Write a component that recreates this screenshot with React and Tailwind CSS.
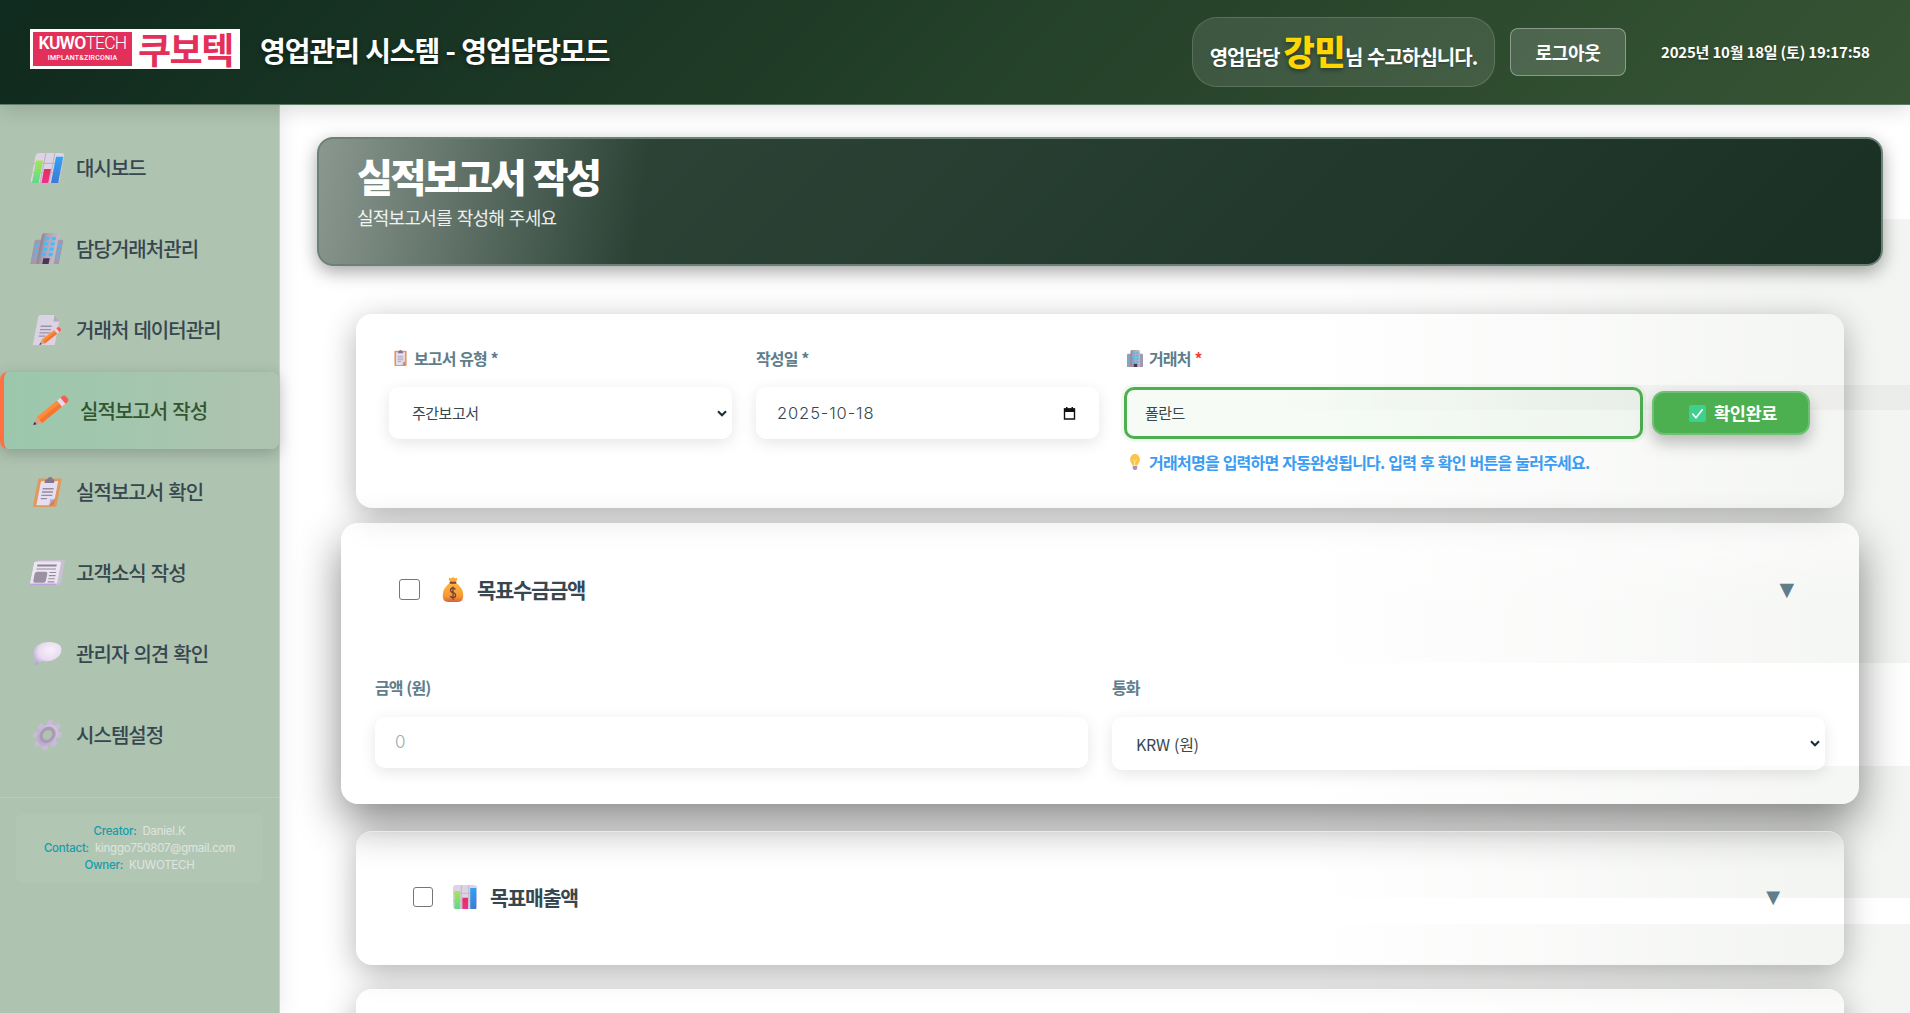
import React from "react";

const base = { viewBox: "0 0 32 32", preserveAspectRatio: "none" };

function ChartIcon({ className }) {
  return (
    <svg {...base} className={className}>
      <defs>
        <linearGradient id="ch1" x1="0" y1="0" x2="0" y2="1"><stop offset="0" stopColor="#a5e653" /><stop offset="1" stopColor="#5fd88b" /></linearGradient>
        <linearGradient id="ch2" x1="0" y1="0" x2="0" y2="1"><stop offset="0" stopColor="#e0305e" /><stop offset="1" stopColor="#f0308a" /></linearGradient>
        <linearGradient id="ch3" x1="0" y1="0" x2="0" y2="1"><stop offset="0" stopColor="#2fa3f5" /><stop offset="1" stopColor="#3f79d4" /></linearGradient>
      </defs>
      <rect x="0" y="0" width="32" height="32" rx="4" fill="#dcd3e4" />
      <path d="M11 0v32M21 0v32M0 11h32M0 21h32" stroke="#bdb2c6" strokeWidth="1.2" />
      <rect x="2" y="8" width="7.5" height="24" fill="url(#ch1)" />
      <rect x="12.5" y="17" width="7.5" height="15" fill="url(#ch2)" />
      <rect x="23" y="4" width="8" height="28" fill="url(#ch3)" />
    </svg>
  );
}

function BuildingIcon({ className }) {
  const rows = [6, 11.5, 17, 22.5];
  return (
    <svg {...base} className={className}>
      <defs>
        <linearGradient id="bd1" x1="0" y1="0" x2="1" y2="0"><stop offset="0" stopColor="#8d8294" /><stop offset=".3" stopColor="#ada2b4" /><stop offset="1" stopColor="#c3b9c9" /></linearGradient>
      </defs>
      <path d="M0 9q0-2 2-2h28q2 0 2 2v23H0z" fill="#a498ab" />
      <path d="M7 3q0-3 3-3h13q3 0 3 3v29H7z" fill="url(#bd1)" />
      {rows.map((y) => (
        <g key={y} fill="#45bdf8">
          <rect x="11" y={y - 2} width="4.6" height="3.4" rx=".5" />
          <rect x="18.5" y={y - 2} width="4.6" height="3.4" rx=".5" />
          {y > 6 && <rect x="2.5" y={y} width="2.6" height="3.4" />}
          {y > 6 && <rect x="27.6" y={y} width="2.6" height="3.4" />}
        </g>
      ))}
      <rect x="13.5" y="26" width="7" height="6" fill="#4a3552" />
    </svg>
  );
}

function PencilShape() {
  return (
    <g>
      <path d="M3.2 22.6 22 3.8l6.2 6.2L9.4 28.8z" fill="#ff8a3a" />
      <path d="M6.3 25.7 25 7l3.2 3L9.4 28.8z" fill="#f5762f" />
      <path d="M3.2 22.6 1 31l8.4-2.2z" fill="#d9a189" />
      <path d="M1.9 27.7 1 31l3.3-.9z" fill="#3d2a4a" />
      <path d="m20 5.8 3-3 6.2 6.2-3 3z" fill="#e4d8ee" />
      <path d="m23 2.8 1.5-1.5q2-1.5 4 .4l1.8 1.8q2 2 .4 4L29.2 9z" fill="#ff5a4a" />
    </g>
  );
}

function PencilIcon({ className }) {
  return (
    <svg {...base} className={className}><PencilShape /></svg>
  );
}

function MemoIcon({ className }) {
  return (
    <svg {...base} className={className}>
      <path d="M2 2q0-2 2-2h17l7 7v25H2z" fill="#dbd3e3" />
      <path d="M21 0v7h7z" fill="#b5a9be" />
      <path d="M7 12h13M7 15.5h13M7 19h13M7 22.5h8" stroke="#9d93a5" strokeWidth="1.4" />
      <g transform="translate(9 12.5) scale(.74 .62)"><PencilShape /></g>
    </svg>
  );
}

function ClipboardIcon({ className }) {
  return (
    <svg {...base} className={className}>
      <rect x="1" y="1.5" width="30" height="30.5" rx="1.5" fill="#e0995c" />
      <path d="M5 4.5h22V23l-6 7H5z" fill="#e6def0" />
      <path d="M27 23v7h-6z" fill="#c98552" />
      <path d="M21 30q1.5-3 0-6.5 3 1 6-.5z" fill="#b9a5d4" />
      <path d="M10 6.5V4q0-2 3-2 0-2 3-2t3 2q3 0 3 2v2.5z" fill="#82778d" />
      <path d="M9 12.5h14M9 16h14M9 19.5h14M9 23h8" stroke="#958b9f" strokeWidth="1.4" />
    </svg>
  );
}

function NewsIcon({ className }) {
  return (
    <svg {...base} className={className}>
      <path d="M4 0h26q2 0 2 3v26q0 3-3 3H6z" fill="#c9bfd3" />
      <path d="M0 4q0-2 2-2h24q2 0 2 2v28H0z" fill="#ece6f2" />
      <path d="M0 30h28v2H0z" fill="#bda3df" />
      <path d="M4 7h20" stroke="#8d8296" strokeWidth="2.6" />
      <path d="M4 11.5h20M18 16h7M18 20h7M18 24h7M18 28h7" stroke="#958a9e" strokeWidth="1.5" />
      <rect x="3" y="15" width="13" height="14" rx="2.5" fill="#9b90a4" />
    </svg>
  );
}

function BubbleIcon({ className }) {
  return (
    <svg {...base} className={className}>
      <defs>
        <radialGradient id="bb" cx=".6" cy=".35" r=".7"><stop offset="0" stopColor="#f7f1fa" /><stop offset=".6" stopColor="#e8dcf0" /><stop offset="1" stopColor="#b9a3d6" /></radialGradient>
      </defs>
      <path d="M16 0c9.5 0 16 5 16 12.8S25.5 27 16 27q-2 0-4-.4Q9 30.5 5.500 32q-2 0-1-1.5 1-2.5.5-5.5-5-4-5-11.500C0 5.5 6.5 0 16 0z" fill="url(#bb)" />
    </svg>
  );
}

function GearIcon({ className }) {
  return (
    <svg {...base} className={className}>
      <defs>
        <linearGradient id="gr" x1="0" y1="1" x2="1" y2="0"><stop offset="0" stopColor="#b6a3d0" /><stop offset="1" stopColor="#d6cade" /></linearGradient>
      </defs>
      {[0, 45, 90, 135, 180, 225, 270, 315].map((a) => (
        <rect key={a} x="12.8" y="0" width="6.4" height="9" rx="2.4" fill="#c9bad9" transform={`rotate(${a} 16 16)`} />
      ))}
      <circle cx="16" cy="16" r="11.5" fill="url(#gr)" />
      <circle cx="16" cy="16" r="7" fill="#aec3b0" stroke="#a89bb3" strokeWidth="3.6" />
    </svg>
  );
}

function MoneyBagIcon({ className }) {
  return (
    <svg {...base} className={className}>
      <defs>
        <linearGradient id="mb" x1="0" y1="0" x2="0" y2="1"><stop offset="0" stopColor="#fdb73c" /><stop offset=".7" stopColor="#f59a35" /><stop offset="1" stopColor="#d95f3c" /></linearGradient>
      </defs>
      <path d="M10 1q3 1.5 6-1 3 2.5 6 1 1 2-2 6h-8Q9 3 10 1z" fill="#fbab38" />
      <path d="M12 7h8q11 7 11 17 0 8-8 8H9q-8 0-8-8Q1 14 12 7z" fill="url(#mb)" />
      <rect x="11" y="6" width="10" height="2.6" rx="1.2" fill="#7c4138" />
      <path d="M19.5 16q-1.5-2-3.8-2-3.2 0-3.2 3 0 2.3 3.5 3 3.8.8 3.8 3.4 0 3.1-3.8 3.1-2.5 0-4-2.200M16 12v17" stroke="#7c4138" strokeWidth="1.9" fill="none" />
    </svg>
  );
}

function BulbIcon({ className }) {
  return (
    <svg {...base} className={className}>
      <path d="M16 0c8 0 13 5 13 11.5 0 5-5 7-6.5 11.5h-13C8 18.5 3 16.5 3 11.5 3 5 8 0 16 0z" fill="#fcc34b" />
      <path d="M12 11l3 4v8M20 11l-3 4" stroke="#fff0a5" strokeWidth="2" fill="none" />
      <path d="M10 24h12v5q-2 3-6 3t-6-3z" fill="#a795bd" />
    </svg>
  );
}

function CheckIcon({ className }) {
  return (
    <svg {...base} className={className}>
      <rect width="32" height="32" rx="4" fill="#3fd08d" />
      <path d="M7 17l6 7L25 9" stroke="#fff" strokeWidth="3.2" fill="none" strokeLinecap="round" strokeLinejoin="round" />
    </svg>
  );
}

const Chevron = () => (
  <svg viewBox="0 0 10 7" className="h-[7px] w-[10px]"><path d="M1 1.2l4 4 4-4" stroke="#1f2d35" strokeWidth="2.1" fill="none" /></svg>
);

const nav = [
  { label: "대시보드", Icon: ChartIcon, size: "h-[30px] w-[29px]" },
  { label: "담당거래처관리", Icon: BuildingIcon, size: "h-[31px] w-[29px]" },
  { label: "거래처 데이터관리", Icon: MemoIcon, size: "h-[30px] w-[27px]" },
  { label: "실적보고서 작성", Icon: PencilIcon, size: "h-[31px] w-[32px]", active: true },
  { label: "실적보고서 확인", Icon: ClipboardIcon, size: "h-[30px] w-[25px]" },
  { label: "고객소식 작성", Icon: NewsIcon, size: "h-[25px] w-[31px]" },
  { label: "관리자 의견 확인", Icon: BubbleIcon, size: "h-[23px] w-[28px]" },
  { label: "시스템설정", Icon: GearIcon, size: "h-[30px] w-[29px]" },
];

function Header() {
  return (
    <header className="relative z-20 flex h-[105px] shrink-0 items-center border-b border-[#5f7c68] bg-[linear-gradient(135deg,#0f2a1e_0%,#375534_100%)] pl-[30px] text-white shadow-[0_4px_20px_rgba(0,0,0,0.15)]">
      <div className="-mt-[7px] flex h-10 w-[210px] shrink-0 items-center bg-white pl-[3px]">
        <div className="flex h-[34px] w-[99px] flex-col items-center justify-center bg-[#e2305a] font-['Roboto'] leading-none">
          <span className="text-[17.5px] font-semibold tracking-[-0.8px]">KUWO<span className="font-light">TECH</span></span>
          <span className="mt-[3px] text-[7px] font-medium tracking-[0.2px]">IMPLANT&amp;ZIRCONIA</span>
        </div>
        <span className="-mt-[2px] ml-[6px] text-[36px] font-bold leading-[40px] tracking-[-1.5px] text-[#e2305a]">쿠보텍</span>
      </div>
      <h1 className="-mt-[5px] ml-[20px] whitespace-nowrap text-[28px] font-bold leading-none tracking-[-1.05px] [text-shadow:0_2px_4px_rgba(0,0,0,0.4)] [word-spacing:1px]">영업관리 시스템 - 영업담당모드</h1>
      <div className="ml-auto flex h-[70px] w-[303px] items-center justify-center rounded-[25px] border border-white/15 bg-white/10">
        <p className="mt-px flex items-baseline whitespace-nowrap text-[20px] font-bold tracking-[-0.95px] [text-shadow:0_1px_2px_rgba(0,0,0,0.3)] [word-spacing:1px]">
          영업담당
          <strong className="ml-[4px] text-[34px] font-black leading-none tracking-[-0.5px] text-[#ffd700] [text-shadow:0_2px_4px_rgba(0,0,0,0.4)]">강민</strong>
          님 수고하십니다.
        </p>
      </div>
      <button className="ml-[15px] h-12 w-[116px] rounded-lg border border-white/35 bg-white/15 text-[18px] font-bold tracking-[-0.3px]">로그아웃</button>
      <time className="ml-[35px] w-[249px] whitespace-nowrap text-[15px] font-bold tracking-[-0.2px] [text-shadow:0_1px_2px_rgba(0,0,0,0.3)]">2025년 10월 18일 (토) 19:17:58</time>
    </header>
  );
}

function Sidebar() {
  return (
    <aside className="relative z-10 w-[280px] shrink-0 border-r border-[#c3d3c5] bg-[#aec3b0] pt-6 shadow-[2px_0_20px_rgba(0,0,0,0.08)]">
      <nav className="flex flex-col gap-1">
        {nav.map(({ label, Icon, size, active }) => (
          <a
            key={label}
            className={
              active
                ? "flex h-[77px] items-center rounded-lg border-l-4 border-[#ff7043] bg-[linear-gradient(90deg,#9bc8ad,#aec3b0)] pl-[28px] text-[#33552f] shadow-[0_4px_15px_rgba(0,0,0,0.2)]"
                : "flex h-[77px] items-center pl-[28px] text-[#37474f]"
            }
          >
            <span className="flex w-[38px] justify-center"><Icon className={`-skew-x-[11deg] ${size}`} /></span>
            <span className="ml-[10px] mt-px whitespace-nowrap text-[20px] font-medium leading-none tracking-[-0.95px] [word-spacing:1.5px]">{label}</span>
          </a>
        ))}
      </nav>
      <div className="mt-6 border-t border-white/15 py-4 pl-4 pr-[16px]">
        <div className="flex h-[69px] flex-col items-center justify-center rounded-lg bg-white/5 font-['Inter'] text-[11.5px] leading-[17px] tracking-[-0.23px] text-white/55">
          <p><b className="mr-[6px] font-medium text-[#129daa]">Creator:</b>Daniel.K</p>
          <p><b className="mr-[6px] font-medium text-[#129daa]">Contact:</b>kinggo750807@gmail.com</p>
          <p><b className="mr-[6px] font-medium text-[#129daa]">Owner:</b>KUWOTECH</p>
        </div>
      </div>
    </aside>
  );
}

const label = "flex items-center whitespace-nowrap text-[16px] font-bold leading-none tracking-[-0.9px] [word-spacing:1px] text-[#607d8b]";
const field = "flex items-center rounded-[10px] bg-white/60 text-[#37474f] shadow-[0_4px_15px_rgba(0,0,0,0.1)]";

function ReportForm() {
  return (
    <section className="flex h-[194px] rounded-[16px] bg-white/15 pl-[33px] pt-[35px] shadow-[0_8px_32px_rgba(0,0,0,0.3)]">
      <div className="w-[343px]">
        <div className={`${label} h-[18px]`}><ClipboardIcon className="ml-[5px] mr-[7px] h-4 w-[13px]" />보고서 유형 *</div>
        <div className={`${field} mt-[20px] h-[52px] justify-between pl-[23px] pr-[5px] text-[15px] tracking-[-0.5px]`}>주간보고서<Chevron /></div>
      </div>
      <div className="ml-6 w-[343px]">
        <div className={`${label} h-[18px]`}>작성일 *</div>
        <div className={`${field} mt-[20px] h-[52px] justify-between pl-[21px] pr-[23px] font-['Inter'] text-[16.5px] font-light tracking-[0.9px]`}>
          2025-10-18
          <svg viewBox="0 0 13 13" className="h-[13px] w-[13px]"><path d="M1.500 2h10v10H1.500z" fill="none" stroke="#111" strokeWidth="1.4" /><path d="M1 1.500h11V5H1zM3 0h1.5v2H3zM8.5 0H10v2H8.500z" fill="#111" /></svg>
        </div>
      </div>
      <div className="ml-[25px] w-[687px]">
        <div className={`${label} h-[18px]`}><BuildingIcon className="ml-[3px] mr-[6px] h-[17px] w-[16px]" />거래처<span className="ml-[4px] text-[#f44336]">*</span></div>
        <div className="mt-[20px] flex items-center gap-[9px]">
          <div className="flex h-[52px] w-[519px] items-center rounded-[10px] border-[3px] border-[#4caf50] bg-[#4caf50]/5 pl-[18px] text-[15px] tracking-[-0.6px] text-[#37474f] shadow-[0_0_0_3px_rgba(76,175,80,0.08)]">폴란드</div>
          <button className="flex h-[44px] w-[158px] items-center justify-center rounded-[12px] border-2 border-[#6fc073] bg-[#4caf50] text-[17.5px] font-bold tracking-[-0.3px] text-white shadow-[0_8px_16px_rgba(0,0,0,0.25)]"><CheckIcon className="ml-1 mr-2 h-[17px] w-[17px]" />확인완료</button>
        </div>
        <div className="mt-[13px] flex h-5 items-center whitespace-nowrap text-[16px] font-bold leading-none tracking-[-0.75px] text-[#3a9cf2] [word-spacing:0.9px]"><BulbIcon className="ml-[5px] mr-2 h-4 w-[12px]" />거래처명을 입력하면 자동완성됩니다. 입력 후 확인 버튼을 눌러주세요.</div>
      </div>
    </section>
  );
}

function GoalCollection() {
  return (
    <section className="-mx-[15px] mt-[15px] h-[281px] rounded-[17px] bg-[linear-gradient(180deg,rgba(255,255,255,0.6),rgba(255,255,255,0.2)_30%)] pt-[44px] shadow-[0_18px_44px_rgba(0,0,0,0.47)]">
      <div className="flex h-[44px] items-center pl-[58px] pr-[65px]">
        <span className="h-[21px] w-[21px] rounded-[3px] border border-[#767676] bg-white" />
        <MoneyBagIcon className="ml-[22px] h-[25px] w-[22px]" />
        <h3 className="ml-[13px] text-[21px] font-bold leading-none tracking-[-1.3px] text-[#37474f]">목표수금금액</h3>
        <span className="ml-auto font-['DejaVu_Sans'] text-[19px] leading-none text-[#607d8b]">▼</span>
      </div>
      <div className="mt-[67px] grid grid-cols-2 gap-6 px-[34px]">
        <div>
          <div className={`${label} h-[18px]`}>금액 (원)</div>
          <div className={`${field} mt-[21px] h-[51px] pl-5 font-['Inter'] text-[17px] font-light text-[#a0aab2]!`}>0</div>
        </div>
        <div>
          <div className={`${label} h-[18px]`}>통화</div>
          <div className={`${field} mt-[21px] h-[53px] justify-between pl-[24px] pr-[5px] text-[16px] tracking-[-0.3px] [word-spacing:1px]`}>KRW (원)<Chevron /></div>
        </div>
      </div>
    </section>
  );
}

function GoalSales() {
  return (
    <section className="mt-[27px] h-[134px] rounded-[16px] border-t border-white/40 bg-white/5 pt-[43px] shadow-[0_8px_32px_rgba(0,0,0,0.3)]">
      <div className="flex h-[44px] items-center pl-[57px] pr-[64px]">
        <span className="h-5 w-5 rounded-[3px] border border-[#767676] bg-white" />
        <ChartIcon className="ml-[20px] h-[24px] w-[24px]" />
        <h3 className="ml-[13px] text-[20.5px] font-bold leading-none tracking-[-1.3px] text-[#37474f]">목표매출액</h3>
        <span className="ml-auto font-['DejaVu_Sans'] text-[18px] leading-none text-[#607d8b]">▼</span>
      </div>
    </section>
  );
}

export default function App() {
  return (
    <div className="flex h-[1013px] w-[1910px] flex-col overflow-hidden bg-white font-['Noto_Sans_CJK_KR',sans-serif]">
      <Header />
      <div className="flex min-h-0 flex-1">
        <Sidebar />
        <main className="flex min-w-0 flex-1 flex-col overflow-hidden bg-[linear-gradient(180deg,#fff_114px,transparent_114px,transparent_558px,#fff_558px,#fff_661px,transparent_661px,transparent_793px,#fff_793px,#fff_819px,transparent_819px),linear-gradient(90deg,transparent_60%,rgba(0,0,0,0.035)_85%),linear-gradient(90deg,#fff_63%,#f3f5f2_95%)] bg-[position:0_0,0_280px,0_0] bg-[size:100%_100%,100%_25px,100%_100%] bg-no-repeat pl-[37px] pt-8">
          <div className="h-[129px] w-[1566px] shrink-0 rounded-[16px] border-2 border-[#6a8275] bg-[linear-gradient(98deg,rgba(255,255,255,0.44),rgba(255,255,255,0)_21%),linear-gradient(135deg,#30473a,#1a3025)] pl-[38px] pt-[15px] text-white shadow-[0_6px_18px_rgba(0,0,0,0.35)]">
            <h2 className="text-[39px] font-black leading-[42px] tracking-[-2.45px] [word-spacing:2px]">실적보고서 작성</h2>
            <p className="mt-[9px] text-[18px] leading-[24px] tracking-[-0.75px] text-white/90 [word-spacing:1.5px]">실적보고서를 작성해 주세요</p>
          </div>
          <div className="ml-[39px] mt-12 w-[1488px] shrink-0">
            <ReportForm />
            <GoalCollection />
            <GoalSales />
            <section className="mt-6 h-[134px] rounded-[16px] border-t border-white/40 bg-white/50 shadow-[0_8px_32px_rgba(0,0,0,0.3)]" />
          </div>
        </main>
      </div>
    </div>
  );
}
